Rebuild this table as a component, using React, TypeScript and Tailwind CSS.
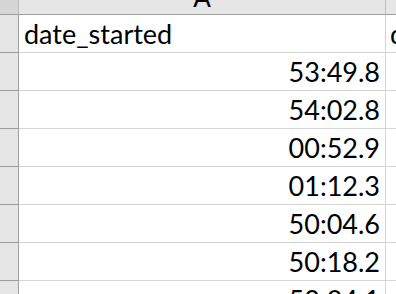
import React from "react";

const rows = ["53:49.8", "54:02.8", "00:52.9", "01:12.3", "50:04.6", "50:18.2", "50:24.1"];

export default function App() {
  const font = { fontFamily: "Lato, 'Open Sans', sans-serif" };
  return (
    <div className="w-[396px] h-[294px] overflow-hidden bg-white text-black" style={font}>
      <div className="flex h-[15px] border-b border-[#9e9e9e] bg-[#e6e6e6]">
        <div className="w-[19px] shrink-0 bg-[#d6d6d6] border-r border-[#bdbdbd]" />
        <div className="w-[367px] shrink-0 border-r border-[#bdbdbd] relative overflow-hidden">
          <span className="absolute left-0 right-0 text-center text-[26px] leading-none bottom-[4px]">A</span>
        </div>
        <div className="flex-1" />
      </div>
      {["date_started", ...rows].map((t, i) => (
        <div key={i} className="flex h-[38px] shrink-0">
          <div className="w-[19px] shrink-0 bg-[#e6e6e6] border-r border-b border-[#9e9e9e]" />
          <div
            className={`w-[367px] shrink-0 border-r border-b border-[#d4d4d4] flex items-end pb-[5px] text-[27px] leading-none ${
              i === 0 ? "justify-start pl-[5px]" : "justify-end pr-[5px]"
            }`}
          >
            {t}
          </div>
          <div className="flex-1 border-b border-[#d4d4d4] overflow-hidden flex items-end pb-[5px] text-[27px] leading-none pl-[4px] whitespace-nowrap">
            {i === 0 ? "date_finished" : ""}
          </div>
        </div>
      ))}
    </div>
  );
}
